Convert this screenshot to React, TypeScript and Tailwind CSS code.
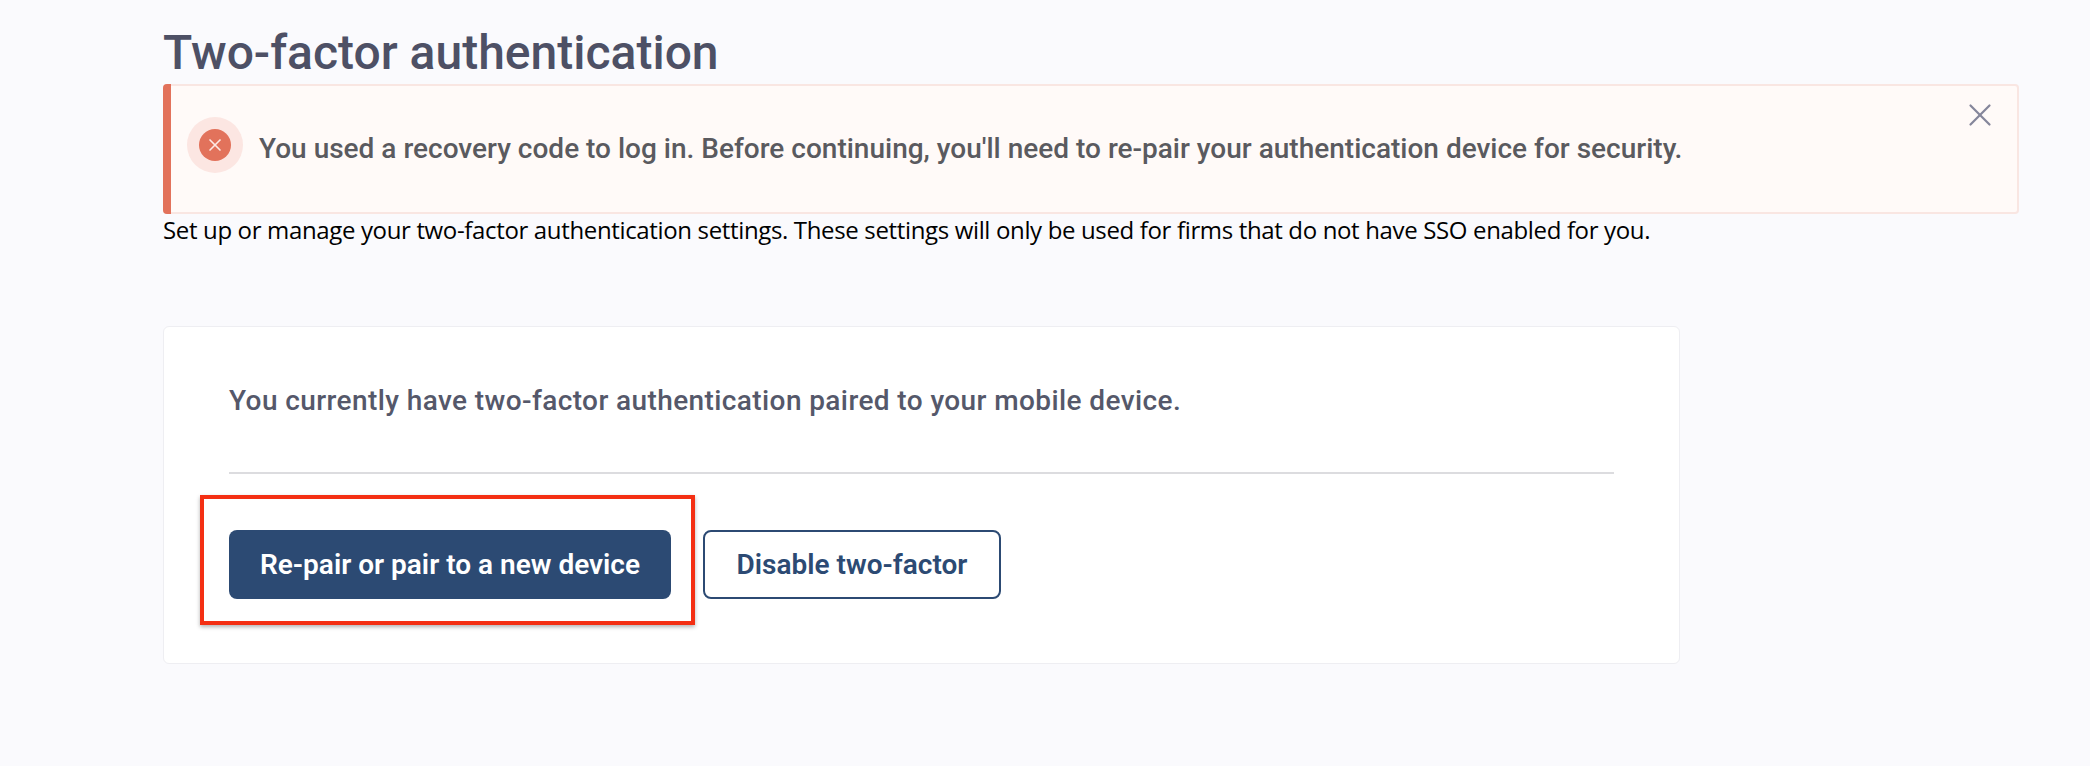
import React from 'react';
import { X } from 'lucide-react';

export default function App() {
  return (
    <div className="min-h-[766px] bg-[#fafafd] pl-[163px] pr-[71px] font-['Roboto',sans-serif]">
      <h1 className="h-[84px] pt-[25px] text-[48px] leading-[56px] font-medium text-[#4d5065]">
        Two-factor authentication
      </h1>

      <div className="relative flex h-[130px] items-center rounded-[4px] border-2 border-l-0 border-[#f9e6e2] bg-[#fffaf8] pl-[24px]">
        <div className="absolute left-0 -top-[2px] -bottom-[2px] w-[8px] rounded-l-[4px] bg-[#e2725b]" />
        <div className="-mt-[8px] flex h-[56px] w-[56px] shrink-0 items-center justify-center rounded-full bg-[#fce6e2]">
          <div className="flex h-[32px] w-[32px] items-center justify-center rounded-full bg-[#e2725b]">
            <X size={20} strokeWidth={2} className="text-[#fde9e5]" />
          </div>
        </div>
        <p className="ml-[16px] text-[28px] font-medium text-[#5a5a5f]">
          You used a recovery code to log in. Before continuing, you'll need to re-pair your authentication device for security.
        </p>
        <button className="absolute right-[18px] top-[10px] text-[#85869a]">
          <X size={38} strokeWidth={1.4} />
        </button>
      </div>

      <p className="font-['Open_Sans',sans-serif] text-[24px] leading-[32px] tracking-[-0.35px] text-black">
        Set up or manage your two-factor authentication settings. These settings will only be used for firms that do not have SSO enabled for you.
      </p>

      <div className="mt-[80px] h-[338px] w-[1517px] rounded-[6px] border border-[#eeeef2] bg-white px-[65px] pt-[54px]">
        <p className="text-[28px] leading-[40px] font-medium text-[#55586a] tracking-[0.4px]">
          You currently have two-factor authentication paired to your mobile device.
        </p>
        <div className="mt-[51px] h-[2px] bg-[#dcdcdf]" />
        <div className="mt-[56px] flex gap-[32px]">
          <div className="relative">
            <button className="h-[69px] w-[442px] rounded-[8px] bg-[#2c4a73] text-[28px] font-semibold text-white">
              Re-pair or pair to a new device
            </button>
            <div className="pointer-events-none absolute -left-[29px] -right-[24px] -top-[35px] -bottom-[26px] border-[4px] border-[#f42f13] shadow-[0_2px_4px_rgba(0,0,0,0.3)]" />
          </div>
          <button className="h-[69px] w-[298px] rounded-[8px] border-2 border-[#2c4a73] bg-white text-[28px] font-semibold text-[#2c4a73]">
            Disable two-factor
          </button>
        </div>
      </div>
    </div>
  );
}
